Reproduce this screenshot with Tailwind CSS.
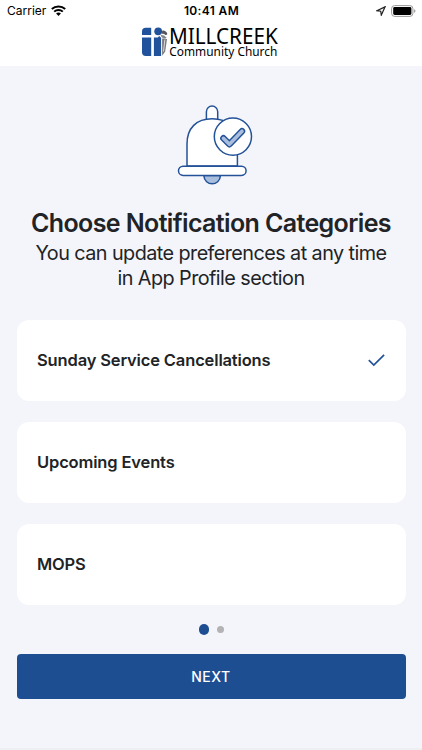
<!DOCTYPE html>
<html lang="en">
<head>
<meta charset="utf-8">
<title>Notification Categories</title>
<script src="https://cdn.jsdelivr.net/npm/@tailwindcss/browser@4"></script>
</head>
<body class="w-[422px] h-[750px] overflow-hidden bg-[#f4f5fa] font-['Inter',sans-serif] text-[#212326] flex flex-col">
<header class="h-[66px] shrink-0 bg-white text-black flex flex-col">
  <div class="h-[22px] grid grid-cols-3 items-center pl-[7px] pr-[6px]">
    <div class="flex items-center gap-[5px]">
      <span class="text-[12px] leading-[22px]">Carrier</span>
      <svg class="w-[15px] h-[11px] mb-[2px]" viewBox="0 0 15 11" fill="none" stroke="#000" stroke-width="2"><path d="M.8 4.1C4.5.6 10.5.6 14.2 4.1"/><path d="M3.2 6.6c2.4-2.3 6.2-2.3 8.6 0"/><path d="M5.1 8.5c1.4-1.3 3.4-1.3 4.8 0L7.5 11z" fill="#000" stroke="none"/></svg>
    </div>
    <div class="text-center text-[12px] leading-[22px] font-semibold tracking-[0.35px] whitespace-nowrap">10:41 AM</div>
    <div class="flex items-center justify-end gap-[5px] pb-px">
      <svg class="w-[10px] h-[10px]" viewBox="0 0 10 10" fill="none" stroke="#222" stroke-width="1.2" stroke-linejoin="miter"><path d="M9 .9.9 4.7l3.8.5.6 3.9z"/></svg>
      <svg class="w-[25px] h-[12px]" viewBox="0 0 25 12"><rect x=".6" y=".6" width="21.3" height="10.8" rx="3" fill="none" stroke="#999" stroke-width="1"/><rect x="2.2" y="2.1" width="18.2" height="7.8" rx="1.4"/><path d="M23.2 4.2c1.6.5 1.6 3.1 0 3.6z" fill="#888"/></svg>
    </div>
  </div>
  <svg class="w-[138px] h-[38px] ml-[141px] overflow-visible" viewBox="141 22 138 38">
    <g fill="#21539c">
      <path d="M142 34.9v-3.4q0-3.7 3.7-3.7h5.5v7.1z"/>
      <path d="M142 37.5h9.2V56h-5.5q-3.7 0-3.7-3.7z"/>
      <circle cx="158.2" cy="31.3" r="3.9"/>
      <path d="M153.9 37.5h4l1.2-1.6 2 1.9V56h-7.2z"/>
    </g>
    <path d="M162.2 30.7c2-.5 3.7.4 4.9 2.3.5 1.5-.4 2.3-1.7 1.9-1.6-1.2-2.7-1.2-3.7-1z" fill="#55585d"/>
    <path d="M160.6 35.2c1.6-.5 3.8.1 6 2.5l-1.3.8c-1.8.3-3.6-.6-4.7-3.3z" fill="#85888c"/>
    <path d="M162.1 38.4 167 39l-1.8 12.4-3.1 4.4z" fill="#77797d"/>
    <path d="m164.9 39.5-1.4 12" stroke="#ddd" stroke-width="1"/>
    <text x="169" y="44.4" font-family="Noto Sans" font-size="22.4" textLength="108.8" lengthAdjust="spacingAndGlyphs">MILLCREEK</text>
    <text x="169.3" y="56.2" font-family="Noto Sans" font-size="12.3" textLength="108" lengthAdjust="spacingAndGlyphs">Community Church</text>
  </svg>
</header>
<main class="flex-1 flex flex-col px-[16.5px] pt-[36px]">
  <svg class="w-[82px] h-[86px] ml-[157.5px] shrink-0" viewBox="174 102 82 86" fill="#fff" stroke="#245299" stroke-width="1.5">
    <path d="M206.4 121v-9.3a5.65 5.65 0 0 1 11.3 0V121"/>
    <path d="M203.8 175.5c.7 11 16 11 16.7 0z" fill="#a9bddd"/>
    <path d="M187 166v-22c0-16 9.5-25.2 25.2-25.2S237.4 128 237.4 144v22z"/>
    <rect x="178.5" y="166.2" width="67.6" height="9.2" rx="4.6"/>
    <circle cx="232.9" cy="136.6" r="18.6"/>
    <path d="m223.4 138.3 6 6 12.6-13.1" fill="none" stroke-width="6.5" stroke-linecap="round" stroke-linejoin="round"/>
    <path d="m223.4 138.3 6 6 12.6-13.1" fill="none" stroke="#a9bddd" stroke-width="3.6" stroke-linecap="round" stroke-linejoin="round"/>
  </svg>
  <h1 class="mt-[18px] text-center text-[25px] leading-[34px] font-semibold tracking-[-0.62px] whitespace-nowrap">Choose Notification Categories</h1>
  <p class="mt-px text-center text-[19.8px] leading-[24.5px] tracking-[-0.55px] whitespace-nowrap">You can update preferences at any time<br>in App Profile section</p>
  <ul class="mt-[30px] flex flex-col gap-[20.5px] text-[16.5px] tracking-[-0.15px] font-semibold">
    <li class="h-[81.3px] rounded-[12px] bg-white flex items-center justify-between pl-[20.5px] pr-[20.5px]"><span>Sunday Service Cancellations</span>
      <svg class="w-[17px] h-[13px]" viewBox="0 0 17 13" fill="none" stroke="#245299" stroke-width="1.7"><path d="m.8 6.2 5 4.9L16.1.8"/></svg></li>
    <li class="h-[81.3px] rounded-[12px] bg-white flex items-center pl-[20.5px]"><span>Upcoming Events</span></li>
    <li class="h-[81.3px] rounded-[12px] bg-white flex items-center pl-[20.5px]"><span>MOPS</span></li>
  </ul>
  <div class="mt-[19px] h-[11px] flex items-center justify-center gap-[8px]"><i class="size-[10.5px] rounded-full bg-[#1d4e92]"></i><i class="size-[6.5px] rounded-full bg-[#b3b3b5]"></i></div>
  <button class="mt-[19px] h-[45px] rounded-[4px] bg-[#1d4e92] text-white text-[14px] font-medium tracking-[0.5px]">NEXT</button>
</main>
<footer class="h-[2px] shrink-0 bg-[#eeeff2]"></footer>
</body>
</html>
